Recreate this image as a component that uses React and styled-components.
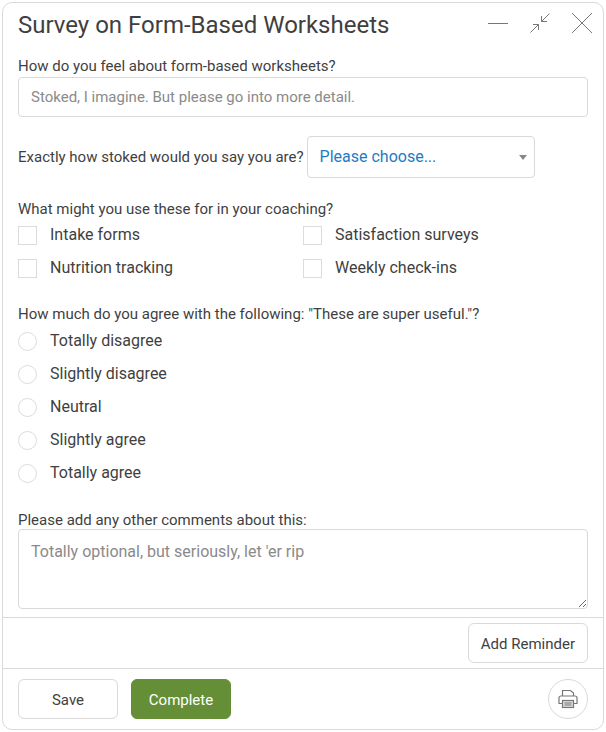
import React from 'react';
import styled, { createGlobalStyle } from 'styled-components';

const CHECKS = ['Intake forms', 'Satisfaction surveys', 'Nutrition tracking', 'Weekly check-ins'];
const RADIOS = ['Totally disagree', 'Slightly disagree', 'Neutral', 'Slightly agree', 'Totally agree'];

const App = () => {
  return (
    <>
      <GlobalStyle />
      <Card>
        <Header>
          <Title>Survey on Form-Based Worksheets</Title>
          <WindowIcons>
            <svg width="20" height="20" viewBox="0 0 20 20" fill="none" stroke="#777" strokeWidth="1">
              <path d="M0 10.5H20" />
            </svg>
            <svg width="20" height="20" viewBox="0 0 20 20" fill="none" stroke="#777" strokeWidth="1">
              <path d="M19.5 0.5L11.5 8.5M11.5 3V8.5H17M0.5 19.5L8.5 11.5M3 11.5H8.5V17" />
            </svg>
            <svg width="20" height="20" viewBox="0 0 20 20" fill="none" stroke="#777" strokeWidth="1">
              <path d="M0 0L20 20M20 0L0 20" />
            </svg>
          </WindowIcons>
        </Header>
        <Body>
          <Label>How do you feel about form-based worksheets?</Label>
          <TextInput placeholder="Stoked, I imagine. But please go into more detail." />
          <SelectRow>
            <Label>Exactly how stoked would you say you are?</Label>
            <Select>
              Please choose...
              <Caret />
            </Select>
          </SelectRow>
          <Label>What might you use these for in your coaching?</Label>
          <CheckGrid>
            {CHECKS.map(item => (
              <Option key={item}>
                <CheckBox />
                {item}
              </Option>
            ))}
          </CheckGrid>
          <RadioLabel>How much do you agree with the following: "These are super useful."?</RadioLabel>
          <RadioList>
            {RADIOS.map(item => (
              <Option key={item}>
                <Radio />
                {item}
              </Option>
            ))}
          </RadioList>
          <CommentLabel>Please add any other comments about this:</CommentLabel>
          <TextArea placeholder="Totally optional, but seriously, let 'er rip" />
        </Body>
        <ReminderBar>
          <Button>Add Reminder</Button>
        </ReminderBar>
        <Footer>
          <SaveButton>Save</SaveButton>
          <CompleteButton>Complete</CompleteButton>
          <PrintButton aria-label="print">
            <svg width="20" height="20" viewBox="0 0 20 20" fill="none" stroke="#777" strokeWidth="1.2">
              <path d="M4.5 7V1.5H12.5L15.5 4V7" />
              <path d="M4 14.5H1V9C1 8 1.8 7 3 7H17C18.2 7 19 8 19 9V14.5H16" />
              <rect x="4.5" y="11.5" width="11" height="7" fill="#ddd" />
              <path d="M6.5 14H13.5M6.5 16H13.5" />
            </svg>
          </PrintButton>
        </Footer>
      </Card>
    </>
  );
};

const GlobalStyle = createGlobalStyle`
  body {
    margin: 0;
    background: #fff;
    font-family: Roboto, "Liberation Sans", sans-serif;
    color: #3f3f3f;
  }
`;

const Card = styled.div`
  box-sizing: border-box;
  width: 602px;
  height: 728px;
  margin: 2px 0 0 2px;
  border: 1px solid #d9d9d9;
  border-radius: 10px;
  display: flex;
  flex-direction: column;
`;

const Header = styled.div`
  display: flex;
  justify-content: space-between;
  align-items: center;
  height: 42px;
  padding: 0 11px 0 15px;
`;

const Title = styled.h1`
  margin: 2px 0 0;
  font-size: 24px;
  font-weight: 400;
  color: #3f3f3f;
`;

const WindowIcons = styled.div`
  display: flex;
  align-items: center;
  gap: 22px;
  margin-bottom: 2px;
`;

const Body = styled.div`
  flex: 1;
  display: flex;
  flex-direction: column;
  padding: 11px 15px 0;
`;

const Label = styled.div`
  font-size: 15px;
  line-height: 20px;
  color: #3f3f3f;
  white-space: nowrap;
`;

const TextInput = styled.input`
  box-sizing: border-box;
  width: 100%;
  height: 40px;
  margin-top: 1px;
  padding: 0 12px;
  border: 1px solid #d9d9d9;
  border-radius: 4px;
  font: 15px Roboto, sans-serif;
  &::placeholder {
    color: #8a8a8a;
    opacity: 1;
  }
`;

const SelectRow = styled.div`
  display: flex;
  align-items: center;
  gap: 3px;
  margin: 19px 0 21px;
`;

const Select = styled.div`
  position: relative;
  box-sizing: border-box;
  width: 228px;
  height: 42px;
  padding: 0 12px;
  border: 1px solid #d9d9d9;
  border-radius: 4px;
  font-size: 16px;
  line-height: 40px;
  color: #1f7ac4;
`;

const Caret = styled.span`
  position: absolute;
  right: 7px;
  top: 18px;
  border-left: 4px solid transparent;
  border-right: 4px solid transparent;
  border-top: 5px solid #888;
`;

const CheckGrid = styled.div`
  display: grid;
  grid-template-columns: 285px 1fr;
  row-gap: 13px;
  margin-top: 5px;
`;

const Option = styled.label`
  display: flex;
  align-items: center;
  gap: 13px;
  height: 20px;
  font-size: 16px;
  color: #3f3f3f;
`;

const CheckBox = styled.span`
  box-sizing: border-box;
  width: 19px;
  height: 19px;
  margin-top: 2px;
  border: 1px solid #dcdcdc;
`;

const Radio = styled(CheckBox)`
  border-radius: 50%;
`;

const RadioLabel = styled(Label)`
  margin-top: 27px;
`;

const RadioList = styled.div`
  display: flex;
  flex-direction: column;
  gap: 13px;
  margin-top: 6px;
`;

const CommentLabel = styled(Label)`
  margin-top: 29px;
  line-height: 18px;
`;

const TextArea = styled.textarea`
  box-sizing: border-box;
  width: 100%;
  height: 80px;
  padding: 12px;
  border: 1px solid #d9d9d9;
  border-radius: 4px;
  font: 16px Roboto, sans-serif;
  &::placeholder {
    color: #8a8a8a;
    opacity: 1;
  }
`;

const ReminderBar = styled.div`
  display: flex;
  justify-content: flex-end;
  align-items: center;
  height: 50px;
  padding: 0 15px;
  border-top: 1px solid #d9d9d9;
`;

const Button = styled.button`
  box-sizing: border-box;
  height: 40px;
  padding: 1px 12px 0;
  background: #fff;
  border: 1px solid #d9d9d9;
  border-radius: 6px;
  font: 400 15px Roboto, sans-serif;
  color: #3f3f3f;
`;

const Footer = styled.div`
  display: flex;
  align-items: center;
  gap: 13px;
  height: 60px;
  padding: 0 15px;
  border-top: 1px solid #d9d9d9;
`;

const SaveButton = styled(Button)`
  width: 100px;
`;

const CompleteButton = styled(Button)`
  width: 100px;
  background: #658f36;
  border-color: #658f36;
  color: #fff;
`;

const PrintButton = styled.button`
  display: flex;
  align-items: center;
  justify-content: center;
  box-sizing: border-box;
  width: 40px;
  height: 40px;
  margin-left: auto;
  padding: 0;
  background: #fff;
  border: 1px solid #d9d9d9;
  border-radius: 50%;
`;

export default App;
